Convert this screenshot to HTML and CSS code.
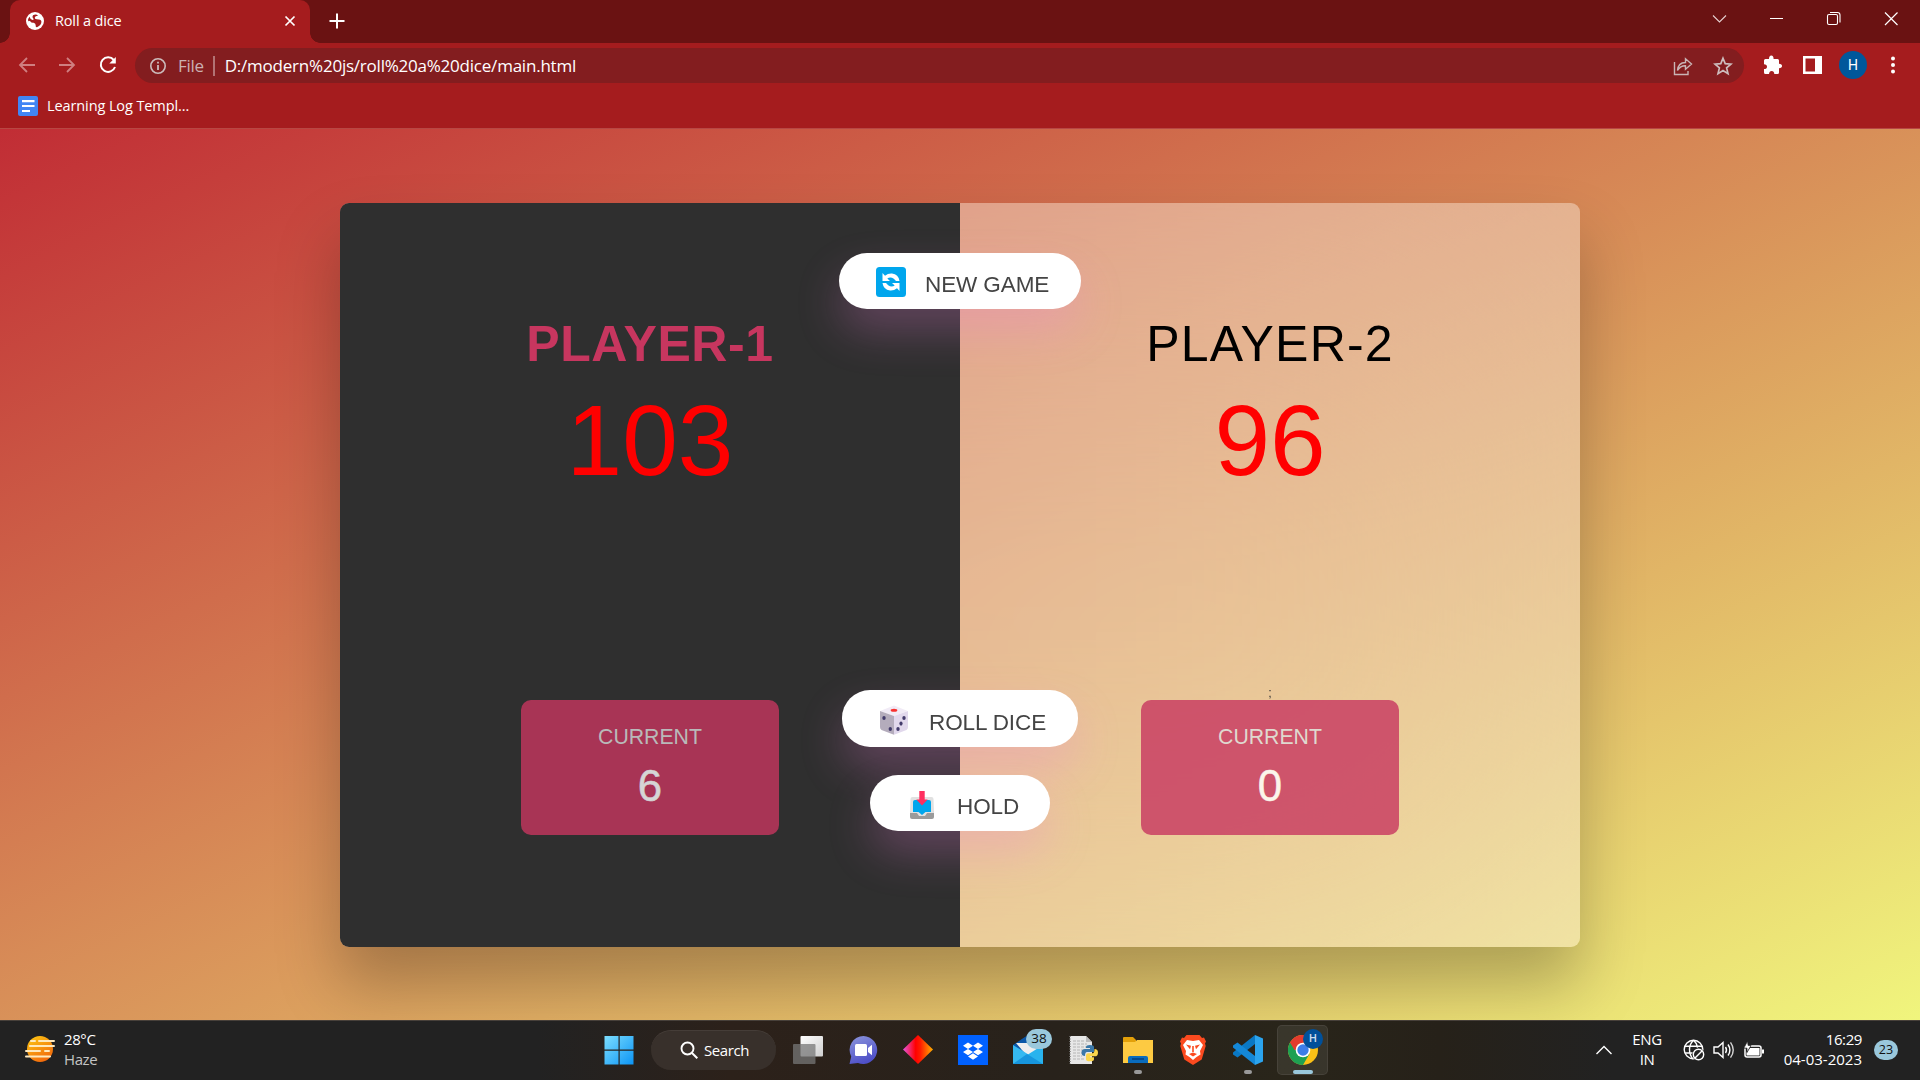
FILE: index.html
```html
<!DOCTYPE html>
<html lang="en">
<head>
<meta charset="utf-8">
<title>Roll a dice</title>
<link rel="stylesheet" href="styles.css">
</head>
<body>
<header class="browser">
  <div class="tabstrip">
    <div class="tab">
      <svg class="tab-globe" width="18" height="18" viewBox="0 0 18 18"><circle cx="9" cy="9" r="9" fill="#fff"/><path d="M7 3.2q3.5-1.4 5 .6-3 .2-3.2 1.7-.4 1.8 2 1.8 4.400 0 4.600 2.200.2 3.500-4.400 5.800-1.600.2-1.300-1.800.1-2.400-2-2.800Q5.200 11 4.500 9.400 2.200 8 2 10q-.5-3.500 1.600-5.300.6 3 3 3.200Q8.500 7.600 7.100 6.200 5.800 5 7 3.200z" fill="#a51c1e"/></svg>
      <span class="tab-title">Roll a dice</span>
      <svg class="tab-close" width="12" height="12" viewBox="0 0 12 12"><path d="M1.500 1.500l9 9M10.500 1.500l-9 9" stroke="#fff" stroke-width="1.700"/></svg>
    </div>
    <svg class="new-tab" width="16" height="16" viewBox="0 0 16 16"><path d="M8 .5v15M.5 8h15" stroke="#fff" stroke-width="2"/></svg>
    <div class="window-controls">
      <svg width="58" height="38" viewBox="0 0 58 38"><path d="M23 15.500l6.500 6.500 6.500-6.500" fill="none" stroke="#e5cfcf" stroke-width="1.100"/></svg>
      <svg width="58" height="38" viewBox="0 0 58 38"><path d="M22 18.500h13" stroke="#fff" stroke-width="1"/></svg>
      <svg width="58" height="38" viewBox="0 0 58 38"><g fill="none" stroke="#fff" stroke-width="1.100"><rect x="21.500" y="14.500" width="10" height="10" rx="1.500"/><path d="M24 12.500h7.500q2.500 0 2.500 2.500v7.500"/></g></svg>
      <svg width="58" height="38" viewBox="0 0 58 38"><path d="M21 12.500l12.500 12.500M33.500 12.500L21 25" stroke="#fff" stroke-width="1.200"/></svg>
    </div>
  </div>
  <div class="toolbar">
    <svg class="nav" width="18" height="18" viewBox="0 0 18 18"><path d="M17 9H2M9 2L2 9l7 7" fill="none" stroke="#cf7f80" stroke-width="1.800"/></svg>
    <svg class="nav" width="18" height="18" viewBox="0 0 18 18"><path d="M1 9h15M9 2l7 7-7 7" fill="none" stroke="#cf7f80" stroke-width="1.800"/></svg>
    <svg class="nav" width="20" height="20" viewBox="0 0 20 20"><path d="M15.800 5A7.300 7.300 0 1 0 17 12" fill="none" stroke="#fff" stroke-width="2"/><path d="M17.800 2v6.500H11.300z" fill="#fff"/></svg>
    <div class="omnibox">
      <svg width="18" height="18" viewBox="0 0 18 18"><circle cx="9" cy="9" r="7.200" fill="none" stroke="#cbb" stroke-width="1.600"/><path d="M9 8v5M9 4.800v1.800" stroke="#cbb" stroke-width="1.800"/></svg>
      <span class="scheme">File</span>
      <span class="url">D:/modern%20js/roll%20a%20dice/main.html</span>
      <svg class="share" width="20" height="20" viewBox="0 0 20 20"><g fill="none" stroke="#c9b4b5" stroke-width="1.400"><path d="M1.500 6v12.500h13.500V15"/><path d="M4.500 14.500Q5 6.700 12.500 6.500V2.800L18.500 8l-6 5.200V9.800Q7.500 9.600 4.500 14.500z"/></g></svg>
      <svg class="star" width="20" height="20" viewBox="0 0 20 20"><path d="M10 2.200l2.200 5.400 5.800.5-4.400 3.800 1.400 5.700-5-3.100-5 3.100 1.400-5.700L2 8.100l5.800-.5z" fill="none" stroke="#cdbdbd" stroke-width="1.700"/></svg>
    </div>
    <svg class="puzzle" width="20" height="20" viewBox="0 0 20 20"><path d="M1 5.500q0-1.500 1.500-1.500H6q0-3.500 2.300-3.500T10.600 4h4q1.400 0 1.400 1.500v3.300q3 .2 3 2.200t-3 2.200v4.300q0 1.500-1.400 1.500h-3.300q-.2-3.100-2.600-3.100T6 19H2.500Q1 19 1 17.500V14q3 0 3-2.300T1 9.200z" fill="#fff"/></svg>
    <svg class="panel" width="19" height="18" viewBox="0 0 19 18"><path fill-rule="evenodd" d="M0 0h19v18H0zM2.500 2.500v13H12v-13z" fill="#fff"/></svg>
    <span class="avatar">H</span>
    <svg class="kebab" width="6" height="18" viewBox="0 0 6 18"><g fill="#fff"><circle cx="3" cy="2.500" r="2"/><circle cx="3" cy="9" r="2"/><circle cx="3" cy="15.500" r="2"/></g></svg>
  </div>
  <div class="bookmarks">
    <svg width="20" height="20" viewBox="0 0 20 20"><rect width="20" height="20" rx="2" fill="#4285f4"/><path d="M4 5.200h12.500M4 10h12.500M4 15h8" stroke="#fff" stroke-width="2.200"/></svg>
    <span class="bookmark-title">Learning Log Templ...</span>
  </div>
</header>

<main class="page">
  <div class="board">
    <section class="player winner">
      <h2 class="name">PLAYER-1</h2>
      <p class="score">103</p>
      <span class="stray"></span>
      <div class="current"><p class="current-label">CURRENT</p><p class="current-score">6</p></div>
    </section>
    <section class="player other">
      <h2 class="name">PLAYER-2</h2>
      <p class="score">96</p>
      <span class="stray">;</span>
      <div class="current"><p class="current-label">CURRENT</p><p class="current-score">0</p></div>
    </section>
    <button class="btn btn-new">
      <svg width="30" height="30" viewBox="0 0 30 30"><rect width="30" height="30" rx="3.500" fill="#00a6ed"/><path d="M6.500 6v8H14l-2.700-2.500q3-2.300 6.500.2L20 14h3.500Q22.500 7.200 16 6.500q-4-.3-7 2.200z" fill="#fff"/><path d="M23.500 24v-8H16l2.700 2.500q-3 2.300-6.500-.2L10 16H6.500q1 6.800 7.500 7.500 4 .3 7-2.200z" fill="#fff"/></svg>
      <span>NEW GAME</span>
    </button>
    <button class="btn btn-roll">
      <svg width="30" height="30" viewBox="0 0 30 30"><path d="M15 .5L28.800 6 15 11 1 6z" fill="#f1ebf6"/><path d="M1 6L15 11v18.800L2.500 25Q1 24 1 22z" fill="#b4acbc"/><path d="M15 11l14-5V22q0 2-1.500 3L15 29.800z" fill="#e1d8ec"/><ellipse cx="15" cy="5.200" rx="3.300" ry="1.500" fill="#f8312f"/><g fill="#433b6b"><ellipse cx="5" cy="13" rx="1.700" ry="2"/><ellipse cx="11.300" cy="24" rx="1.700" ry="2"/><ellipse cx="25" cy="13" rx="1.700" ry="2.100"/><ellipse cx="22" cy="18.600" rx="1.600" ry="2.100"/><ellipse cx="19" cy="24" rx="1.700" ry="2.100"/></g></svg>
      <span>ROLL DICE</span>
    </button>
    <button class="btn btn-hold">
      <svg width="30" height="30" viewBox="0 0 30 30"><path d="M3 21h24v6q0 2-2 2H5q-2 0-2-2z" fill="#9b9b9b"/><path d="M5.500 7h19q2 0 2 2L27 23h-7l-2 3h-6l-2-3H3L3.500 9q0-2 2-2z" fill="#e1e1e1"/><path d="M8 10h14q2 0 2 2v10h-5.500L15 25l-3.500-3H6V12q0-2 2-2z" fill="#00a6ed"/><path d="M12.300 1h5.400v8.500h3L15 15.500l-5.700-6h3z" fill="#ff2f5f"/></svg>
      <span>HOLD</span>
    </button>
  </div>
</main>

<footer class="taskbar">
  <div class="weather">
    <svg width="32" height="28" viewBox="0 0 32 28"><defs><linearGradient id="sun" x1="0" y1="0" x2=".6" y2="1"><stop offset="0" stop-color="#fdcb13"/><stop offset="1" stop-color="#f26a0c"/></linearGradient></defs><circle cx="16" cy="14" r="13" fill="url(#sun)"/><g stroke="#ffe9bd" stroke-width="2" stroke-linecap="round"><path d="M7 6h4M15 6h15M6 11h24M2 16h14M21 16h4M2 21.500h24"/></g></svg>
    <div class="weather-text"><span>28°C</span><span class="dim">Haze</span></div>
  </div>
  <nav class="apps">
    <span class="app"><svg width="30" height="30" viewBox="0 0 30 30"><defs><linearGradient id="win" gradientUnits="userSpaceOnUse" x1="0" y1="0" x2="30" y2="30"><stop offset="0" stop-color="#7fe0ff"/><stop offset="1" stop-color="#0a93f5"/></linearGradient></defs><path d="M.5 1h14v13.500H.500zM15.700 1H29.500v13.500H15.700zM.5 15.700h14V29.500H.500zM15.700 15.700H29.500V29.500H15.700z" fill="url(#win)"/></svg></span>
    <span class="search"><svg width="18" height="18" viewBox="0 0 18 18"><circle cx="7.500" cy="7.500" r="6" fill="none" stroke="#fff" stroke-width="1.900"/><path d="M12 12l5.300 5.300" stroke="#fff" stroke-width="2"/></svg><span class="search-text">Search</span></span>
    <span class="app"><svg width="30" height="30" viewBox="0 0 30 30"><defs><linearGradient id="tv" x1="0" y1="0" x2="1" y2="1"><stop offset="0" stop-color="#fff"/><stop offset="1" stop-color="#cfcfcf"/></linearGradient></defs><rect x="7.500" y="1" width="22.500" height="20.500" rx="1" fill="url(#tv)"/><rect x="0" y="9" width="22.500" height="20" rx="1" fill="#777" opacity=".75"/></svg></span>
    <span class="app"><svg width="30" height="30" viewBox="0 0 30 30"><defs><linearGradient id="chat" x1="0" y1="0" x2=".4" y2="1"><stop offset="0" stop-color="#8c96dc"/><stop offset="1" stop-color="#4f50c8"/></linearGradient></defs><path d="M15.500 1A14 14 0 1 1 10 28l-8.500 1 1.700-7.500A14 14 0 0 1 15.500 1z" fill="url(#chat)"/><rect x="7" y="9" width="12" height="12" rx="1.500" fill="#fff"/><path d="M20 13l4-3.200v10.400L20 17z" fill="#fff"/></svg></span>
    <span class="app"><svg width="30" height="30" viewBox="0 0 30 30"><defs><linearGradient id="dia"><stop offset="0" stop-color="#e356e0"/><stop offset=".42" stop-color="#f00"/><stop offset=".58" stop-color="#ff1c00"/><stop offset="1" stop-color="#ffb000"/></linearGradient></defs><path d="M15 0l15 14.500L15 29 0 14.500z" fill="url(#dia)"/></svg></span>
    <span class="app"><svg width="30" height="30" viewBox="0 0 30 30"><path d="M0 0h30v30H0z" fill="#0061ff"/><path d="M10 7.500l5 3.200-5 3.200-5-3.200zM20 7.500l5 3.200-5 3.200-5-3.200zM10 13.900l5 3.200-5 3.200-5-3.200zM20 13.900l5 3.200-5 3.200-5-3.200zM15 18.300l5 3.200-5 3.200-5-3.200z" fill="#fff"/></svg></span>
    <span class="app"><svg width="30" height="30" viewBox="0 0 30 30"><path d="M0 10L15 0l15 10v10H0z" fill="#0b57a8"/><path d="M3 8h24v10L15 22z" fill="#eee"/><path d="M0 10l17 10.500L0 29z" fill="#35b9f1"/><path d="M30 10v19H0z" fill="#29b3ee"/><path d="M14 19l16 10H0z" fill="#1796de"/></svg><b class="count">38</b></span>
    <span class="app"><svg width="30" height="30" viewBox="0 0 30 30"><path d="M2 1h16l6 6v22H2z" fill="#e7e7e7"/><path d="M18 1v6h6z" fill="#bbb"/><path d="M5 6h11M5 9h14M5 12h14M5 15h10M5 18h9M5 21h9M5 24h12" stroke="#b5b5b5" stroke-dasharray="3 1"/><path d="M2 1v28" stroke="#777" stroke-width="1.500" stroke-dasharray="1 1.500"/><path d="M18 12q0-2 4-2t4 2v5h-7q-2 0-2 4-3.500 0-3.500-3.500T17 14h5v-1h-4z" fill="#3b78a8"/><path d="M26.500 14q3.500 0 3.500 3.700t-3.500 3.600H22v1h4v2q0 2-4 2t-4-2v-4q0-2 2-2h4.500q2 0 2-4.300z" fill="#fbd64b"/></svg></span>
    <span class="app running"><svg width="30" height="30" viewBox="0 0 30 30"><path d="M0 3q0-1 1-1h9l3 3v5H0z" fill="#e3a009"/><path d="M0 7h12l2-2h16v23H0z" fill="#fdca42"/><path d="M5 28v-5q0-2 2-2h16q2 0 2 2v5z" fill="#0a6cbd"/><path d="M9 24h12" stroke="#063e7c" stroke-width="1.500"/></svg></span>
    <span class="app"><svg width="30" height="30" viewBox="0 0 30 30"><path d="M8.500 0h13l2.500 3 2-.5 2 4-1 2 .7 2.500-4 13.500L15 30 6.300 24.500 2.300 11 3 8.500l-1-2 2-4L6 3z" fill="#fb4a1f"/><path d="M9 5l6 1 6-1 4 5-3 6 .5 3.500-4 2.500L15 25l-3.500-3-4-2.500L8 16l-3-6z" fill="#fff"/><path d="M8 9.500l5 1.200-1 3.500zM22 9.500l-5 1.200 1 3.500zM11 19l4-1.500 4 1.500-4 2.500zM14.200 11h1.600v6h-1.600z" fill="#fb4a1f"/></svg></span>
    <span class="app running"><svg width="30" height="30" viewBox="0 0 30 30"><path d="M22 0v9L4.500 22.500 0 19.500v-2z" fill="#0a78c4"/><path d="M22 30v-9L4.500 7.500 0 10.500v2z" fill="#1488d8"/><path d="M22 0l8 3.500v23L22 30z" fill="#2ba4ee"/></svg></span>
    <span class="app active"><svg width="30" height="30" viewBox="0 0 30 30"><circle cx="15" cy="15" r="15" fill="#fbc116"/><path d="M2 7.500A15 15 0 0 0 15 30l6.500-11.300L15 15z" fill="#1ea052"/><path d="M2 7.500A15 15 0 0 1 28 7.500H15v7.500H6.500z" fill="#e33b2e"/><circle cx="15" cy="15" r="7.300" fill="#fff"/><circle cx="15" cy="15" r="5.700" fill="#3c7de8"/></svg><b class="profile">H</b></span>
  </nav>
  <div class="tray">
    <svg class="chevron" width="18" height="10" viewBox="0 0 18 10"><path d="M1.500 9L9 1.500 16.500 9" fill="none" stroke="#fff" stroke-width="1.400"/></svg>
    <div class="lang"><span>ENG</span><span>IN</span></div>
    <svg class="net" width="22" height="22" viewBox="0 0 22 22"><g fill="none" stroke="#fff" stroke-width="1.400"><circle cx="10.500" cy="10.500" r="9.300"/><path d="M2 7.200h17M2 14h8M10 20Q6.500 16 6.500 10.500T10.500 1.200M10.500 1.200q3.500 3 4 7.500"/></g><circle cx="15.500" cy="15.500" r="6.300" fill="#222"/><g fill="none" stroke="#fff" stroke-width="1.400"><circle cx="15.500" cy="15.500" r="5.200"/><path d="M12 19l7-7"/></g></svg>
    <svg class="sound" width="22" height="20" viewBox="0 0 22 20"><g fill="none" stroke="#fff" stroke-width="1.400"><path d="M1 7h4l5-4.500v15L5 13H1z"/><path d="M12.500 7q2 3 0 6"/><path d="M15 4.500q3.800 5.500 0 11"/><path d="M17.500 2.300q5.500 7.700 0 15.400" opacity=".8"/></g></svg>
    <svg class="battery" width="22" height="18" viewBox="0 0 22 18"><rect x="2" y="5" width="16" height="11" rx="2" fill="none" stroke="#fff" stroke-width="1.500"/><path d="M7 7h9.500v7.500h-13V11zM19 8.500h2v4h-2z" fill="#fff"/><path d="M4.500 0L.8 7.200H4v4.300L8 4.500H5.200z" fill="#fff" stroke="#222" stroke-width=".8"/></svg>
    <div class="clock"><span>16:29</span><span class="date">04-03-2023</span></div>
    <span class="notify">23</span>
  </div>
</footer>
</body>
</html>
```
FILE: styles.css
```css
* { box-sizing: border-box; margin: 0; padding: 0; }
html { font-size: 12.5px; }
body {
  width: 1920px; height: 1080px; overflow: hidden;
  display: flex; flex-direction: column;
  font-family: "Open Sans", "Noto Sans", sans-serif;
}
svg { display: block; flex: none; }

/* Browser frame */
.browser { height: 129px; background: #a51c1e; border-bottom: 1px solid #b84743; color: #fff; flex: none; }
.tabstrip { height: 43px; background: #6a1212; display: flex; align-items: flex-start; }
.tab {
  position: relative; width: 300px; height: 43px; margin-left: 10px; padding: 0 14px 2px 16px;
  background: #a51c1e; border-radius: 10px 10px 0 0; display: flex; align-items: center;
}
.tab::before, .tab::after { content: ""; position: absolute; bottom: 0; width: 10px; height: 10px; }
.tab::before { left: -10px; background: radial-gradient(circle at 0 0, #6a1212 9.500px, #a51c1e 10px); }
.tab::after { right: -10px; background: radial-gradient(circle at 100% 0, #6a1212 9.500px, #a51c1e 10px); }
.tab-title { margin-left: 11px; padding-bottom: 1px; font-size: 14.500px; letter-spacing: -0.15px; white-space: nowrap; }
.tab-close { margin-left: auto; }
.new-tab { margin: 13px 0 0 19px; }
.window-controls { margin: 0 -2px 0 auto; display: flex; }
.toolbar { height: 46px; display: flex; align-items: center; padding: 0 0 2px 18px; }
.nav { margin-right: 22px; }
.nav:nth-child(3) { margin-right: 17px; }
.omnibox {
  width: 1609px; height: 35px; margin-top: 1px; border-radius: 18px; background: #831d1f;
  display: flex; align-items: center; padding: 0 11px 0 14px; font-size: 17px;
}
.scheme { margin-left: 11px; padding-right: 9px; border-right: 2px solid #b27374; line-height: 20px; color: #cbb1b2; letter-spacing: -0.3px; }
.url { margin-left: 10px; padding-bottom: 1px; letter-spacing: -0.22px; white-space: nowrap; }
.share { margin-left: auto; }
.star { margin-left: 20px; }
.puzzle { margin-left: 19px; }
.panel { margin-left: 20px; }
.avatar {
  width: 28px; height: 28px; margin-left: 17px; border-radius: 50%; background: #00579b;
  font: 14px/28px Roboto, sans-serif; text-align: center;
}
.kebab { margin-left: 23px; }
.bookmarks { display: flex; align-items: center; height: 34px; padding-left: 18px; }
.bookmark-title { margin-left: 9px; padding-bottom: 2px; font-size: 14.500px; letter-spacing: -0.1px; }

/* Game page */
.page {
  flex: 1; display: flex; align-items: center; justify-content: center;
  background: linear-gradient(to top left, #f0f57d 0%, #c12d35 100%);
  font-family: "Liberation Sans", Arial, sans-serif;
}
.board {
  position: relative; width: 1240px; height: 744px; display: flex;
  border-radius: 9px; box-shadow: 0 3rem 5rem rgba(0, 0, 0, .25);
  background: rgba(255, 255, 255, .35); backdrop-filter: blur(200px);
}
.player { width: 620px; height: 744px; padding-top: 112px; display: flex; flex-direction: column; align-items: center; }
.winner { background: #2f2f2f; border-radius: 9px 0 0 9px; }
.name { font-size: 4rem; line-height: 58px; font-weight: 400; letter-spacing: 1.2px; color: #000; }
.winner .name { font-weight: 700; letter-spacing: .6px; color: #c7365f; }
.score { font-size: 8rem; line-height: 115px; margin-top: 10px; color: #f00; font-weight: 400; }
.stray { height: 14px; margin-top: 188px; font-size: 12.5px; line-height: 14px; color: #333; }
.current {
  width: 258px; height: 135px; padding-top: 25px; border-radius: 10px; background: #c7365f;
  opacity: .8; text-align: center; color: #fff;
}
.current-label { font-size: 1.7rem; line-height: 24px; color: #ddd; }
.current-score { font-size: 3.5rem; line-height: 50px; margin-top: 12px; -webkit-text-stroke: .5px #fff; }
.btn {
  position: absolute; left: 50%; transform: translateX(-50%); height: 56px; border: 0; border-radius: 28px;
  background: #fff; color: #444; font: 1.8rem/26px "Liberation Sans", Arial, sans-serif; letter-spacing: -.1px;
  display: flex; align-items: center; white-space: nowrap;
  box-shadow: 0 1.75rem 3.5rem rgba(240, 128, 220, .26);
}
.btn span { padding-top: 9px; }
.btn-new { top: 50px; width: 242px; padding-left: 37px; gap: 19px; }
.btn-new svg { margin-top: 2px; }
.btn-roll { top: 487px; width: 236px; height: 57px; padding-left: 37px; gap: 20px; }
.btn-roll svg { margin-top: 3px; }
.btn-hold { top: 572px; width: 180px; padding-left: 37px; gap: 20px; }
.btn-hold svg { margin-top: 4px; }

/* Taskbar */
.taskbar {
  position: relative; height: 60px; flex: none; color: #fff; font-size: 15px; border-top: 1px solid #47403a;
  background: linear-gradient(90deg, #222 0%, #222 28%, #2c211a 38%, #28221b 55%, #29251a 67%, #262119 75%, #222 84%, #222 100%);
  display: flex; align-items: center; padding-bottom: 1px;
}
.weather { width: 591px; display: flex; align-items: center; padding-left: 24px; gap: 8px; }
.weather svg { margin-bottom: 3px; }
.weather-text, .lang, .clock { display: flex; flex-direction: column; line-height: 20px; letter-spacing: -0.4px; padding-bottom: 2px; }
.dim { color: #c4c4c4; }
.apps { display: flex; align-items: center; flex: none; }
.app { position: relative; width: 55px; height: 50px; display: flex; align-items: center; justify-content: center; }
.search {
  width: 125px; height: 40px; margin: 0 4px 0 5px; border-radius: 20px; background: #38302b; border-top: 1px solid #453d38;
  display: flex; align-items: center; padding: 0 0 2px 29px; gap: 6px;
}
.search-text { letter-spacing: -0.4px; }
.running::after, .active::after { content: ""; position: absolute; bottom: 1px; width: 8px; height: 4px; border-radius: 2px; background: #999; }
.active::before { content: ""; position: absolute; inset: 0 2px; border-radius: 5px; background: rgba(255, 255, 255, .08); border: 1px solid rgba(255, 255, 255, .07); }
.active::after { width: 20px; background: #9ac8dc; }
.active svg { position: relative; }
.count, .profile { position: absolute; font-weight: 400; text-align: center; }
.count { left: 26px; top: 4px; width: 26px; height: 20px; border-radius: 10px; background: #9ac8dc; color: #111; font-size: 13.5px; line-height: 19px; }
.profile { left: 28px; top: 4px; width: 20px; height: 20px; border-radius: 50%; background: #00509a; color: #cde; font: 500 11px/20px Roboto, sans-serif; }
.tray { margin-left: auto; display: flex; align-items: center; padding-right: 22px; }
.lang { width: 40px; margin-left: 14px; text-align: center; }
.net { margin-left: 16px; }
.sound { margin-left: 8px; }
.battery { margin-left: 8px; }
.clock { width: 97px; text-align: right; }
.date { letter-spacing: 0; }
.notify { width: 24px; height: 20px; margin-left: 12px; border-radius: 12px; background: #9ac8dc; color: #111; font-size: 12.500px; line-height: 19px; text-align: center; }
```
